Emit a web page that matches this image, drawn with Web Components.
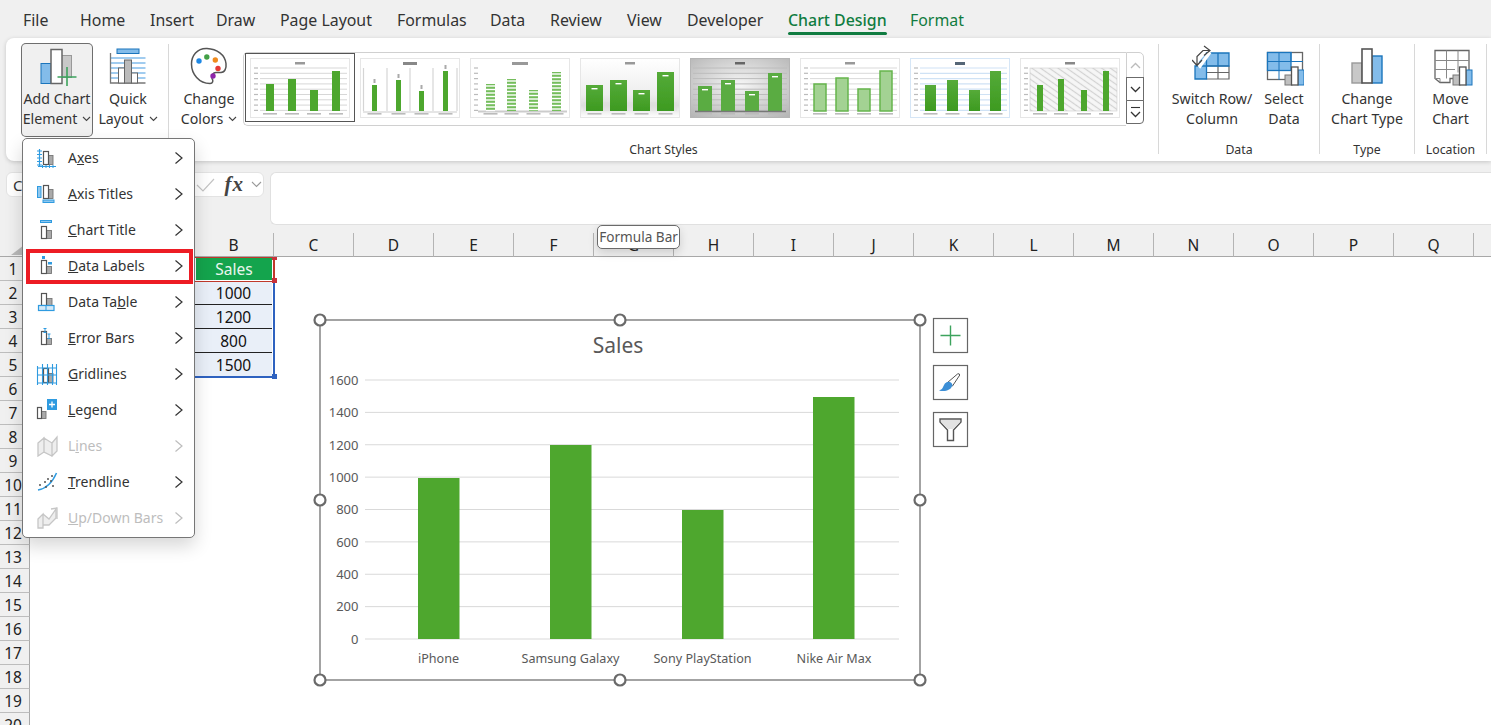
<!DOCTYPE html>
<html><head><meta charset="utf-8"><title>Excel</title>
<style>
html,body{margin:0;padding:0;width:1491px;height:725px;overflow:hidden;background:#f0f0f0}
body{font-family:"Noto Sans","Open Sans",sans-serif}
</style></head><body>
<x-app>
  <x-tabs></x-tabs>
  <x-ribbon></x-ribbon>
  <x-formula></x-formula>
  <x-sheet></x-sheet>
  <x-chart></x-chart>
  <x-menu></x-menu>
  <x-tip>Formula Bar</x-tip>
</x-app>
<script>
const FONT='"Noto Sans","Open Sans",sans-serif';
function def(name,css,html,init){
  customElements.define(name,class extends HTMLElement{
    constructor(){super();const r=this.attachShadow({mode:'open'});
      r.innerHTML='<style>'+css+'</style>'+(typeof html==='function'?html(this):html);}
    connectedCallback(){if(init&&!this._i){this._i=1;init(this)}}
  });
}
/* ---------- app ---------- */
def('x-app',`:host{display:flex;flex-direction:column;position:relative;width:1491px;height:725px;overflow:hidden;background:#f0f0f0;font-family:${FONT};color:#333}`,'<slot></slot>');

/* ---------- tabs ---------- */
const TABS=[['File',57],['Home',70],['Insert',66],['Draw',64],['Page Layout',117],['Formulas',93],['Data',60],['Review',77],['View',60],['Developer',101],['Chart Design',122],['Format',60]];
def('x-tabs',`:host{display:flex;height:38px;padding-left:23px;box-sizing:border-box;font-size:15.9px;color:#333;flex:none}
 span{display:block;line-height:41px;white-space:nowrap;position:relative}
 .g{color:#107c41}.a{color:#107c41;font-weight:500}
 .a::after{content:"";position:absolute;left:0;width:99px;top:32px;height:3px;border-radius:2px;background:#107c41}`,
 ()=>TABS.map(([t,w])=>`<span style="width:${w}px" class="${t=='Chart Design'?'a':t=='Format'?'g':''}">${t}</span>`).join(''));

/* ---------- ribbon icons ---------- */
const B='#1b75bc',LB='#83bcea',G='#666';
const svgv=(x,w,body)=>`<svg width="${w}" height="44" viewBox="${x} 45 ${w} 44">${body}</svg>`;
const IC={
 add:svgv(37.5,40,`<rect x="41.5" y="63.5" width="10" height="20" fill="${LB}" stroke="${B}"/><rect x="62" y="55.5" width="10" height="22" fill="#c8c8c8" stroke="#999"/><rect x="51.5" y="49.5" width="11" height="34" fill="#fff" stroke="#666" stroke-width="1.5"/><path d="M58 77h19M67.500 67v19" stroke="#3da35d" stroke-width="1.6" fill="none"/>`),
 quick:svgv(107.5,40,`<rect x="116.500" y="49" width="22" height="4.500" fill="${LB}" stroke="${B}"/><path d="M110 58h35M110 63h35M110 68h35M110 73h35M110 78h35" stroke="${LB}" stroke-width="1.400"/><path d="M110 53v30h35" fill="none" stroke="#777" stroke-width="1.300"/><rect x="118" y="68" width="6" height="15" fill="#fff" stroke="#666"/><rect x="124" y="60" width="7" height="23" fill="#bbb" stroke="#666"/><rect x="131" y="73" width="6" height="10" fill="#fff" stroke="#666"/>`),
 palette:svgv(190,40,`<path d="M208 48.500C198 48 192.500 56 192.500 64C192.500 74 200 83.500 211 83.500C214 83.500 214.500 80.500 213 78.500C212 75.500 214 72.500 217 72.500L222 72.500C226 72.500 227.500 68 227 63.500C226 54.500 218 49 208 48.500Z" fill="#fff" stroke="#555" stroke-width="1.500"/><circle cx="200" cy="61" r="2.700" fill="#1e88e5"/><circle cx="207.800" cy="57" r="2.700" fill="#43a047"/><circle cx="216.300" cy="60" r="2.700" fill="#f08a1d"/><circle cx="219" cy="68.500" r="2.700" fill="#e53935"/><circle cx="214" cy="76" r="2.700" fill="#8e24aa"/>`),
 sw:svgv(1192,40,`<path d="M1206.500 53H1229V66H1206.500V79H1195V66Z" fill="${LB}"/><path d="M1206.500 66H1229V79H1206.500Z" fill="#fff"/><path d="M1206.500 66h22.500v13h-22.500M1218 66v13M1206.500 72.500h22.500" fill="none" stroke="#666" stroke-width="1.200"/><path d="M1206.500 53h22.500v13h-22.500zM1218 53v13M1195 66h11.500v13H1195z" fill="none" stroke="${B}" stroke-width="1.300"/><path d="M1193 58l7 8 10-14" fill="none" stroke="#fff" stroke-width="3.500"/><path d="M1204 46l6 4.500-6 5M1210 50.500h-7l-6 6v8M1192 60l5 5.500 5-5.500" fill="none" stroke="#444" stroke-width="1.200"/>`),
 sel:svgv(1264,40,`<rect x="1267.500" y="52.500" width="35" height="27" fill="#fff" stroke="#666" stroke-width="1.300"/><rect x="1267.500" y="52.500" width="23.500" height="18" fill="${LB}" stroke="${B}" stroke-width="1.300"/><path d="M1279 52v18M1267 61.500h24M1279 70v10M1291 52v10M1291 61.500h12" stroke="${B}" stroke-width="1"/><rect x="1285" y="75" width="7" height="10" fill="#c0c0c0" stroke="#777"/><rect x="1298" y="70" width="6" height="15" fill="${LB}" stroke="${B}"/><rect x="1291.500" y="67" width="6.500" height="18" fill="#fff" stroke="#555" stroke-width="1.300"/>`),
 type:svgv(1346,40,`<rect x="1351" y="63" width="10" height="20" fill="#c8c8c8" stroke="#999" stroke-width="1.400"/><rect x="1371" y="56" width="10" height="27" fill="${LB}" stroke="${B}" stroke-width="1.400"/><rect x="1361" y="49" width="10" height="34" fill="#fff" stroke="#555" stroke-width="1.600"/>`),
 move:svgv(1428,44,`<path d="M1434 50.500h34v28h-19v4h-10l-5-4z" fill="#fff" stroke="#666" stroke-width="1.300"/><path d="M1434 60.500h34M1434 69.500h20M1445.500 50.500v28M1457 50.500v22M1434 78.500h5v4" fill="none" stroke="#888" stroke-width="1"/><rect x="1452" y="75" width="7" height="10" fill="#c0c0c0" stroke="#777"/><rect x="1465" y="70" width="6" height="15" fill="${LB}" stroke="${B}"/><rect x="1458.500" y="67" width="6.500" height="18" fill="#fff" stroke="#555" stroke-width="1.300"/>`)
};
const CHEV=`<svg width="9" height="6" viewBox="0 0 9 6" style="margin-left:5px;vertical-align:2px"><path d="M1 1l3.500 3.500L8 1" fill="none" stroke="#444" stroke-width="1.100"/></svg>`;

/* ---------- ribbon button ---------- */
def('x-rbtn',`:host{display:flex;flex-direction:column;align-items:center;flex:none;box-sizing:border-box;height:94px;padding-top:2px;font-size:14.2px;line-height:20px;color:#333;text-align:center;white-space:nowrap;border-radius:5px}
 :host([on]){background:#f0f0f0;box-shadow:inset 0 0 0 1px #6e6e6e}
 .i{height:44px;flex:none;display:block} svg{display:block}`,
 h=>`<div class="i">${IC[h.getAttribute('icon')]}</div><div><slot></slot></div>`);

/* ---------- chart style thumbnails ---------- */
function thumb(v){
  const id='t'+v;
  const specs={
   1:{x:[16,38,60,82],w:8,t:[26,21,32,13]},
   2:{x:[12,36,59,83],w:5,t:[27,22,33,13]},
   3:{x:[16,37,59,82],w:9,t:[26,21,32,14]},
   4:{x:[6,30,53,77],w:17,t:[27,22,32,14]},
   5:{x:[8,31,55,78],w:14,t:[28,22,33,15]},
   6:{x:[14,36,58,80],w:12,t:[26,20,31,13]},
   7:{x:[15,37,59,80],w:11,t:[27,22,32,13]},
   8:{x:[17,38,61,83],w:6,t:[27,21,32,13]}
  }[v];
  const base=53;let s='';
  const g=(c,sw,x0=10,x1=97,step=5.300)=>{let o='';for(let y=10;y<=base;y+=step)o+=`<path d="M${x0} ${y}H${x1}" stroke="${c}" stroke-width="${sw}"/>`;return o};
  let bg='#fff',bar='#4ea72e',st='none',sw=0,title='#999',tw=10,tb=1.500;
  if(v==1){s+=g('#d2d2d2',.9)}
  if(v==2){for(const x of [3.5,27,50,73,97])s+=`<path d="M${x} 10V53" stroke="#d5d5d5" stroke-width="1.200"/>`;s+=`<path d="M3 54H97" stroke="#ccc" stroke-width="1.200"/>`;tw=14;tb=2;title='#888'}
  if(v==3){s+=`<path d="M8 53.500H97" stroke="#ccc" stroke-width="2"/>`;tw=16;tb=2;title='#999'}
  if(v==4){bg=`url(#bg4${id})`;bar=`url(#gb${id})`;title='#999'}
  if(v==5){bg=`url(#bg5${id})`;s+=g('#bcbcbc',1,3,97);bar='#5aac42';title='#666'}
  if(v==6){s+=g('#d5d5d5',.9);bar='#a3d293';st='#66b54c';sw=1.500}
  if(v==7){s+=g('#cfe2f5',1.200);bar=`url(#gb${id})`;title='#567';tb=2}
  if(v==8){s+=`<rect x="10" y="10" width="87" height="43" fill="url(#h${id})" stroke="#ccc" stroke-width=".6"/>`;title='#888'}
  const defs=`<defs><linearGradient id="bg4${id}" x2="0" y2="1"><stop offset="0" stop-color="#fff"/><stop offset=".6" stop-color="#eee"/><stop offset=".8" stop-color="#dedede"/><stop offset="1" stop-color="#fff"/></linearGradient><radialGradient id="bg5${id}" cx=".5" cy=".45" r=".8"><stop offset="0" stop-color="#f6f6f6"/><stop offset="1" stop-color="#aeaeae"/></radialGradient><linearGradient id="gb${id}" x2="0" y2="1"><stop offset="0" stop-color="#55ab39"/><stop offset="1" stop-color="#3d9a20"/></linearGradient><pattern id="h${id}" width="5" height="5" patternUnits="userSpaceOnUse" patternTransform="rotate(35)"><rect width="5" height="5" fill="#f6f6f6"/><path d="M0 1.500H5" stroke="#d2d2d2" stroke-width="1.200"/></pattern><filter id="f${id}" x="-5%" y="-5%" width="110%" height="110%"><feGaussianBlur stdDeviation=".5"/></filter></defs>`;
  for(let i=0;i<4;i++){
    const x=specs.x[i],w=specs.w,t=specs.t[i];
    s+=`<rect x="${x}" y="${t}" width="${w}" height="${base-t}" fill="${v==3?'#74bd5c':bar}" stroke="${st}" stroke-width="${sw}"/>`;
    if(v==3)for(let y=t+2;y<base;y+=3.500)s+=`<path d="M${x} ${y}h${w}" stroke="#fff" stroke-width="1.400"/>`;
    if(v==2)s+=`<rect x="${x+1.5}" y="${t-6}" width="2" height="4" fill="#aaa"/>`;
    if(v==4||v==5)s+=`<rect x="${x+w/2-3}" y="${t+3}" width="6" height="1.400" fill="#fff"/>`;
    s+=`<rect x="${x+w/2-7}" y="55" width="14" height="1.600" fill="#bbb"/>`;
  }
  if(v==4)s=`<path d="M3 44H97V53H3z" fill="#ddd" opacity=".5"/>`+s;
  if(v==5)s+=`<path d="M5 53.500H96" stroke="#777" stroke-width="1.500"/>`;
  let yl='';if(v!=2&&v!=4&&v!=5){for(let y=10;y<=base;y+=5.300)yl+=`<rect x="4" y="${y-.6}" width="4" height="1.200" fill="#bbb"/>`}
  const border=v==7?'#d6e6f6':v==5?'#b5b5b5':'#e6e6e6';
  return `<svg width="100" height="60" viewBox="0 0 100 60" style="display:block">${defs}<rect x=".5" y=".5" width="99" height="59" fill="${bg}" stroke="${border}"/><g filter="url(#f${id})">${s}${yl}<rect x="${50-tw/2}" y="4" width="${tw}" height="${tb+1}" fill="${title}"/></g></svg>`;
}
def('x-thumb',`:host{display:block;position:relative;width:100px;height:60px;flex:none}
 :host([sel])::before{content:"";position:absolute;left:-5px;top:-5px;right:-5px;bottom:-4px;border:1.500px solid #555;box-sizing:border-box;pointer-events:none}`,
 h=>thumb(+h.getAttribute('v')));
def('x-gallery',`:host{display:flex;flex:none;margin:9px 0 0 1px;height:73px}
 .f{display:flex;gap:10px;box-sizing:border-box;width:883px;height:74px;padding:5px 0 0 6px;border:1.200px solid #d0d0d0;border-right:none;border-radius:5px 0 0 5px;background:#fff}
 .s{display:flex;flex-direction:column;width:18px;height:74px;box-sizing:border-box}
 .s div{box-sizing:border-box;display:flex;align-items:center;justify-content:center;border:1.200px solid #6b6b6b;height:24px;margin-top:-1px;background:#fff}
 .s div:first-child{height:26px;margin-top:0;border:1.200px solid #d0d0d0;border-radius:0 5px 0 0}
 .s div:last-child{border-radius:0 0 4px 0}`,
 ()=>`<div class="f">${[1,2,3,4,5,6,7,8].map(v=>`<x-thumb v="${v}" ${v==1?'sel':''}></x-thumb>`).join('')}</div>
 <div class="s"><div><svg width="11" height="7" viewBox="0 0 11 7"><path d="M1 6l4.500-4.500L10 6" fill="none" stroke="#bbb" stroke-width="1.300"/></svg></div>
 <div><svg width="11" height="7" viewBox="0 0 11 7"><path d="M1 1l4.500 4.500L10 1" fill="none" stroke="#333" stroke-width="1.300"/></svg></div>
 <div><svg width="11" height="12" viewBox="0 0 11 12"><path d="M1 1.500H10" stroke="#333" stroke-width="1.100"/><path d="M1 6l4.500 4.500L10 6" fill="none" stroke="#333" stroke-width="1.300"/></svg></div></div>`);

/* ---------- ribbon group ---------- */
def('x-group',`:host{display:flex;flex-direction:column;flex:none;box-sizing:border-box;height:110px;border-right:1.200px solid #d8d8d8;--off:0px}
 .b{display:flex;height:94px;margin-top:-1px;flex:none}
 .l{font-size:12.300px;line-height:18px;text-align:center;color:#333;margin-top:4px;margin-left:calc(0px - var(--off));white-space:nowrap}`,
 h=>`<div class="b"><slot></slot></div><div class="l">${h.getAttribute('label')||''}</div>`);

def('x-ribbon',`:host{display:flex;flex:none;box-sizing:border-box;height:123px;margin-left:6px;padding:6px 0 0 15px;background:#fff;border-radius:8px 0 0 8px;box-shadow:0 1px 4px rgba(0,0,0,.18)}`,
 ()=>`<x-group style="width:148px"><x-rbtn icon="add" on style="width:72px">Add Chart<br>Element${CHEV}</x-rbtn><x-rbtn icon="quick" style="width:70px">Quick<br>Layout${CHEV}</x-rbtn></x-group>
 <x-group label="Chart Styles" style="width:990px;padding-left:7px;--off:7px"><x-rbtn icon="palette" style="width:66px">Change<br>Colors${CHEV}</x-rbtn><x-gallery></x-gallery></x-group>
 <x-group label="Data" style="width:161px;padding-left:11px;--off:11px"><x-rbtn icon="sw" style="width:84px">Switch Row/<br>Column</x-rbtn><x-rbtn icon="sel" style="width:60px">Select<br>Data</x-rbtn></x-group>
 <x-group label="Type" style="width:95px"><x-rbtn icon="type" style="width:94px">Change<br>Chart Type</x-rbtn></x-group>
 <x-group label="Location" style="width:72px"><x-rbtn icon="move" style="width:71px">Move<br>Chart</x-rbtn></x-group>`);

/* ---------- formula bar ---------- */
def('x-formula',`:host{display:flex;flex:none;gap:6px;margin-top:11px;height:53px;padding-left:6px;box-sizing:content-box}
 .n{display:flex;align-items:center;box-sizing:border-box;width:258px;height:25px;background:#fff;border:1px solid #e3e3e3;border-radius:6px;font-size:15px;color:#333;padding-left:6px;position:relative}
 .n .c{flex:1}
 .fx{font-family:"Liberation Serif",serif;font-style:italic;font-weight:700;font-size:21px;letter-spacing:1px;color:#444;margin-right:7px}
 .v{margin-right:1px}
 .i{flex:1;height:53px;box-sizing:border-box;background:#fff;border:1px solid #e0e0e0;border-right:none;border-radius:6px 0 0 6px}`,
 `<div class="n"><span class="c">C</span><svg width="20" height="16" viewBox="0 0 20 16" style="margin-right:10px"><path d="M2 8l6 6L19 2" fill="none" stroke="#c4c4c4" stroke-width="1.200"/></svg><span class="fx">fx</span><svg class="v" width="11" height="7" viewBox="0 0 11 7"><path d="M1 1l4.500 4.500L10 1" fill="none" stroke="#999" stroke-width="1.100"/></svg></div><div class="i"></div>`);

/* ---------- sheet ---------- */
const COLS='ABCDEFGHIJKLMNOPQ'.split('');
def('x-sheet',`:host{display:grid;position:relative;flex:none;margin-top:8px;height:492px;background:#fff;overflow:hidden;
   grid-template-columns:30px 164px repeat(16,80px) 1fr;grid-template-rows:24px repeat(20,24px);font-size:15.500px;color:#222}
 .ch{display:flex;align-items:center;justify-content:center;background:#f0f0f0;border-right:1px solid #b4b4b4;border-bottom:1px solid #a8a8a8;box-sizing:border-box;padding-top:1px}
 .fill{background:#f0f0f0;border-bottom:1px solid #a8a8a8}
 .corner{background:#f0f0f0;border-bottom:1px solid #a8a8a8;border-right:1px solid #a8a8a8;box-sizing:border-box;position:relative}
 .corner::after{content:"";position:absolute;right:1px;bottom:1px;border-style:solid;border-width:0 0 13px 17px;border-color:transparent transparent #b8b8b8 transparent}
 .rh{display:flex;align-items:center;justify-content:center;background:#f0f0f0;border-right:1px solid #a8a8a8;border-bottom:1px solid #bdbdbd;box-sizing:border-box;grid-column:1;padding-right:3px}
 .cell{grid-column:3;display:flex;align-items:center;justify-content:center;box-sizing:border-box;margin:0 2px 0 1px;background:#e9eff8;color:#111;border-bottom:1.200px solid #222}
 .hd{background:#14a44d;color:#eaf6ee;border-bottom:none;margin:1px 2px 1px 2px}
 .last{border-bottom:none}
 .red,.blue{position:absolute;box-sizing:border-box;pointer-events:none}
 .red{left:194px;top:24px;width:81px;height:25px;border-right:2px solid #c0392b;border-bottom:1.500px solid #c0392b;border-top:1px solid #c0392b}
 .blue{left:194px;top:48px;width:81px;height:97px;border-right:2px solid #2e62c0;border-bottom:2px solid #2e62c0;}
 .k{position:absolute;width:5px;height:5px;box-sizing:border-box}`,
 ()=>{
  let o='<div class="corner"></div>';
  COLS.forEach(c=>o+=`<div class="ch">${c=='A'?'':c}</div>`);o+='<div class="fill"></div>';
  for(let r=1;r<=20;r++){o+=`<div class="rh" style="grid-row:${r+1}">${r}</div>`}
  [['Sales','hd'],['1000',''],['1200',''],['800',''],['1500','last']].forEach((d,i)=>o+=`<div class="cell ${d[1]}" style="grid-row:${i+2}">${d[0]}</div>`);
  o+=`<div class="red"></div><div class="blue"></div>
  <div class="k" style="left:272px;top:45px;background:#c8323a"></div>
  <div class="k" style="left:272px;top:24px;height:3px;background:#c8323a"></div>
  <div class="k" style="left:272px;top:141px;background:#2e62c0"></div>`;
  return o;});

/* ---------- chart (free canvas: drawn in page coordinates) ---------- */
def('x-chart',`:host{display:block;position:absolute;left:310px;top:310px;width:670px;height:380px}
 svg{display:block;font-family:${FONT}} text{fill:#595959}`,
 ()=>{
  let s='';
  for(let i=0;i<=8;i++){const y=380+i*32.375;s+=`<path d="M365 ${y}H899" stroke="#d9d9d9" stroke-width="1"/><text x="358.500" y="${y+4.800}" text-anchor="end" font-size="13">${1600-i*200}</text>`}
  [[418,478,'iPhone',438.500],[550,445,'Samsung Galaxy',570.500],[682,510,'Sony PlayStation',702.500],[813,397,'Nike Air Max',834]].forEach(b=>{
    s+=`<rect x="${b[0]}" y="${b[1]}" width="41.500" height="${639-b[1]}" fill="#4ea72e"/><text x="${b[3]}" y="663" text-anchor="middle" font-size="12.600">${b[2]}</text>`});
  const pts=[[320,320],[620,320],[920,320],[320,500],[920,500],[320,680],[620,680],[920,680]];
  const btn=(y,b)=>`<rect x="933.500" y="${y+.5}" width="34" height="34" fill="#fff" stroke="#666" stroke-width="1.200"/>${b}`;
  return `<svg width="670" height="380" viewBox="310 310 670 380">
   <rect x="320" y="320" width="600" height="360" fill="#fff" stroke="#666" stroke-width="1.200"/>
   <text x="618" y="353" text-anchor="middle" font-size="21">Sales</text>${s}
   ${pts.map(p=>`<circle cx="${p[0]}" cy="${p[1]}" r="5.500" fill="#fff" stroke="#6a6a6a" stroke-width="2.200"/>`).join('')}
   ${btn(318,`<path d="M950.500 325.500v20M940.500 335.500h20" stroke="#3da35d" stroke-width="1.400" fill="none"/>`)}
   ${btn(365,`<path d="M947.500 382.500L957.500 374Q959.500 373 959.800 375L952.500 386Z" fill="#fff" stroke="#555" stroke-width="1"/><path d="M947 382Q951 381 952.500 385Q951.500 389 947 390.500Q943 391.500 939 390.500Q942.500 389.500 943.500 386Q944.500 383 947 382Z" fill="#3d8fd6"/>`)}
   ${btn(412,`<path d="M940 419H961V422L953.500 430V440.500H947.500V430L940 422Z" fill="#fff" stroke="#555" stroke-width="1.400"/><path d="M941 420H960V422L953 429H948L941 422Z" fill="#e2e2e2"/>`)}
  </svg>`;});

/* ---------- menu ---------- */
const BL='#2f9be0';
const bars=(a,b,c,d,e,f,g,h)=>`<rect x="${e}" y="${f}" width="${g}" height="${h}" fill="#aaa" stroke="#777" stroke-width=".9"/><rect x="${a}" y="${b}" width="${c}" height="${d}" fill="#fff" stroke="#555" stroke-width="1.200"/>`;
const MI={
 axes:bars(7.500,4.500,5,13,12.500,8.500,4.500,9)+`<path d="M3.500 2V20M1 4h5M1 7.500h5M1 11h5M1 14.500h5M1 18h5M2 19.500h18" stroke="${BL}" stroke-width="1.200" fill="none"/><path d="M6.500 18v3M10 18v3M13.500 18v3M17 18v3" stroke="${BL}" fill="none"/>`,
 titles:bars(7.500,2.500,5,13,12.500,6.500,4.500,9)+`<rect x="1.500" y="3.500" width="3.500" height="11" fill="#8fc7ee" stroke="${BL}"/><rect x="7" y="17" width="11" height="2.500" fill="#8fc7ee" stroke="${BL}"/>`,
 chart:bars(5.500,7.500,5,12,10.500,11.500,5,8)+`<rect x="4.500" y="1.500" width="11" height="2" fill="#8fc7ee" stroke="${BL}"/>`,
 labels:bars(5.500,5.500,5,13,10.500,11.500,5,7)+`<rect x="6" y="1" width="3" height="3" fill="${BL}"/><rect x="12" y="7" width="4" height="2.500" fill="${BL}"/>`,
 table:bars(5.500,2.500,5,12,10.500,7.500,5.500,7)+`<rect x="2.500" y="14.500" width="15.500" height="5" fill="#d4e9f8" stroke="${BL}" stroke-width="1.200"/><path d="M10 14.500v5" stroke="${BL}"/>`,
 error:bars(5.500,4.500,5,13,10.500,11.500,5,6)+`<path d="M7.500 1.500h3M9 1.500v4M7.500 5.500h3M11.500 7h3M13 7v4.500M11.500 11.500h3" stroke="${BL}" fill="none"/>`,
 grid:bars(7.500,5.500,5,14,12.500,10.500,4.500,9)+`<path d="M1.500 3V22M6.500 1V22M11.500 1V22M16.500 1V22M20.500 1V22M1 5h20M1 12h20M1 20h20" stroke="${BL}" stroke-width="1.100" fill="none"/>`,
 legend:bars(1.500,8.500,4,11,5.500,12.500,4.500,7)+`<rect x="11" y="0" width="10" height="11" fill="${BL}"/><path d="M16 2.500v6M13 5.500h6" stroke="#fff" stroke-width="1.300"/>`,
 lines:`<path d="M2 8l6-5v14l-6 4zM8 3l8 5v13l-8-4zM16 8l5-6v14l-5 5z" fill="#eee" stroke="#c6c6c6" stroke-width="1.300"/>`,
 trend:`<path d="M2 19Q14 17 20.500 2" fill="none" stroke="${BL}" stroke-width="1.500"/><g fill="#555"><circle cx="4" cy="14" r="1"/><circle cx="9" cy="11" r="1"/><circle cx="12" cy="8" r="1"/><circle cx="16" cy="5" r="1"/><circle cx="15" cy="10" r="1"/><circle cx="17" cy="15" r="1"/><circle cx="10" cy="16" r="1"/></g>`,
 updown:`<path d="M2 12l5-5v14H2zM7 7l6 5 7-10v9l-7 7H7" fill="#eee" stroke="#c6c6c6" stroke-width="1.300"/><path d="M15 2l6-1v11" fill="none" stroke="#c6c6c6" stroke-width="1.300"/>`
};
def('x-mitem',`:host{display:flex;align-items:center;position:relative;height:36px;padding-left:13px;font-size:14px;color:#333;white-space:nowrap}
 :host([off]){color:#bdbdbd}
 svg.i{width:22px;height:22px;flex:none;margin-right:10px}
 .t{flex:1;padding-bottom:1px}
 svg.c{margin-right:10px;flex:none}
 :host([mark])::after{content:"";position:absolute;left:3px;top:1px;width:167px;height:35px;box-sizing:border-box;border:4px solid #ed1c24;pointer-events:none}`,
 h=>`<svg class="i" viewBox="0 0 22 22">${MI[h.getAttribute('icon')]}</svg><span class="t"><slot></slot></span><svg class="c" width="10" height="14" viewBox="0 0 10 14"><path d="M1.500 1.500L8 7l-6.500 5.500" fill="none" stroke="${h.hasAttribute('off')?'#bdbdbd':'#333'}" stroke-width="1.200"/></svg>`);
def('x-menu',`:host{display:flex;flex-direction:column;position:absolute;left:22px;top:138px;width:173px;height:400px;box-sizing:border-box;padding-top:1px;background:#fff;border:1px solid #767676;border-radius:5px;box-shadow:0 8px 18px rgba(0,0,0,.16)}`,
 `<x-mitem icon="axes">A<u>x</u>es</x-mitem><x-mitem icon="titles"><u>A</u>xis Titles</x-mitem><x-mitem icon="chart"><u>C</u>hart Title</x-mitem><x-mitem icon="labels" mark><u>D</u>ata Labels</x-mitem><x-mitem icon="table">Data Ta<u>b</u>le</x-mitem><x-mitem icon="error"><u>E</u>rror Bars</x-mitem><x-mitem icon="grid"><u>G</u>ridlines</x-mitem><x-mitem icon="legend"><u>L</u>egend</x-mitem><x-mitem icon="lines" off>L<u>i</u>nes</x-mitem><x-mitem icon="trend"><u>T</u>rendline</x-mitem><x-mitem icon="updown" off><u>U</u>p/Down Bars</x-mitem>`);

/* ---------- tooltip ---------- */
def('x-tip',`:host{display:block;position:absolute;left:597px;top:225px;width:83px;height:24px;box-sizing:border-box;background:#fff;border:1px solid #6a6a6a;border-radius:5px;font-size:13.600px;line-height:22px;text-align:center;color:#555;white-space:nowrap;box-shadow:0 4px 10px rgba(0,0,0,.14)}`,'<slot></slot>');
</script>
</body></html>
